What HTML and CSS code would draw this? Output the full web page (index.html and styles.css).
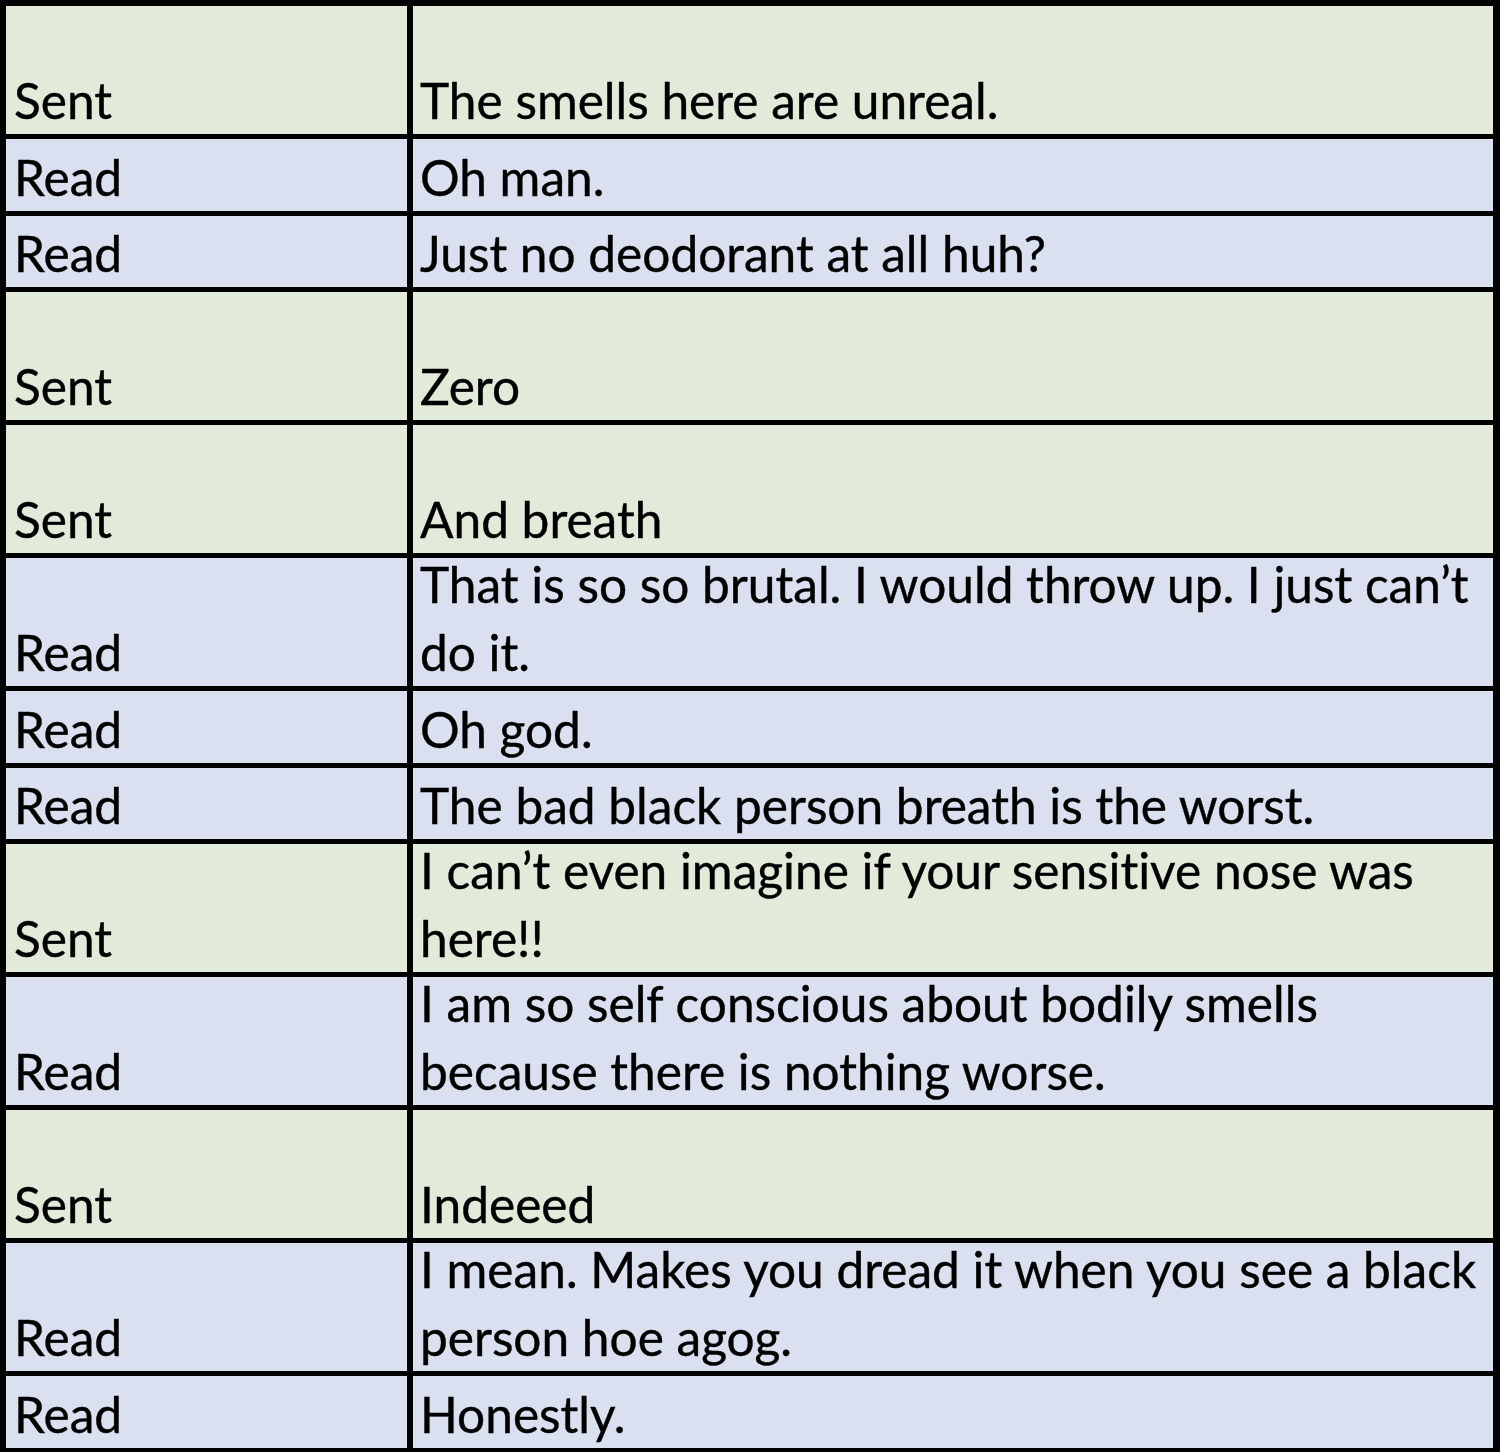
FILE: index.html
```html
<!DOCTYPE html>
<html lang="en">
<head>
<meta charset="utf-8">
<title>Messages</title>
<link rel="stylesheet" href="styles.css">
</head>
<body>
<div class="sheet">
  <div class="cell sent tall label">Sent</div><div class="cell sent tall msg">The smells here are unreal.</div>
  <div class="cell read short label">Read</div><div class="cell read short msg">Oh man.</div>
  <div class="cell read short label">Read</div><div class="cell read short msg">Just no deodorant at all huh?</div>
  <div class="cell sent tall label">Sent</div><div class="cell sent tall msg">Zero</div>
  <div class="cell sent tall label">Sent</div><div class="cell sent tall msg">And breath</div>
  <div class="cell read tall label">Read</div><div class="cell read tall msg">That is so so brutal. I would throw up. I just can’t<br>do it.</div>
  <div class="cell read short label">Read</div><div class="cell read short msg">Oh god.</div>
  <div class="cell read short label">Read</div><div class="cell read short msg">The bad black person breath is the worst.</div>
  <div class="cell sent tall label">Sent</div><div class="cell sent tall msg">I can’t even imagine if your sensitive nose was<br>here!!</div>
  <div class="cell read tall label">Read</div><div class="cell read tall msg">I am so self conscious about bodily smells<br>because there is nothing worse.</div>
  <div class="cell sent tall label">Sent</div><div class="cell sent tall msg">Indeeed</div>
  <div class="cell read tall label">Read</div><div class="cell read tall msg">I mean. Makes you dread it when you see a black<br>person hoe agog.</div>
  <div class="cell read short label">Read</div><div class="cell read short msg">Honestly.</div>
</div>
</body>
</html>
```
FILE: styles.css
```css
html, body {
  margin: 0;
  padding: 0;
  background: #000;
}
.sheet {
  width: 1500px;
  height: 1452px;
  box-sizing: border-box;
  background: #000;
  padding: 6px 7px 8px 6px;
  display: grid;
  grid-template-columns: 401px 1080px;
  column-gap: 6px;
  row-gap: 5px;
  align-content: start;
  font-family: Lato, "Open Sans", sans-serif;
  font-size: 49.6px;
  line-height: 68px;
  color: #000;
  font-variant-ligatures: none;
  -webkit-text-stroke: 0.4px #000;
}
.cell {
  display: flex;
  flex-direction: column;
  justify-content: flex-end;
  box-sizing: border-box;
  overflow: visible;
}
.tall { height: 128px; }
.short { height: 71.5px; }
.sent { background: #e2ebda; }
.read { background: #dae0f0; }
.label { padding-left: 8px; }
.msg { padding-left: 7px; }
```
